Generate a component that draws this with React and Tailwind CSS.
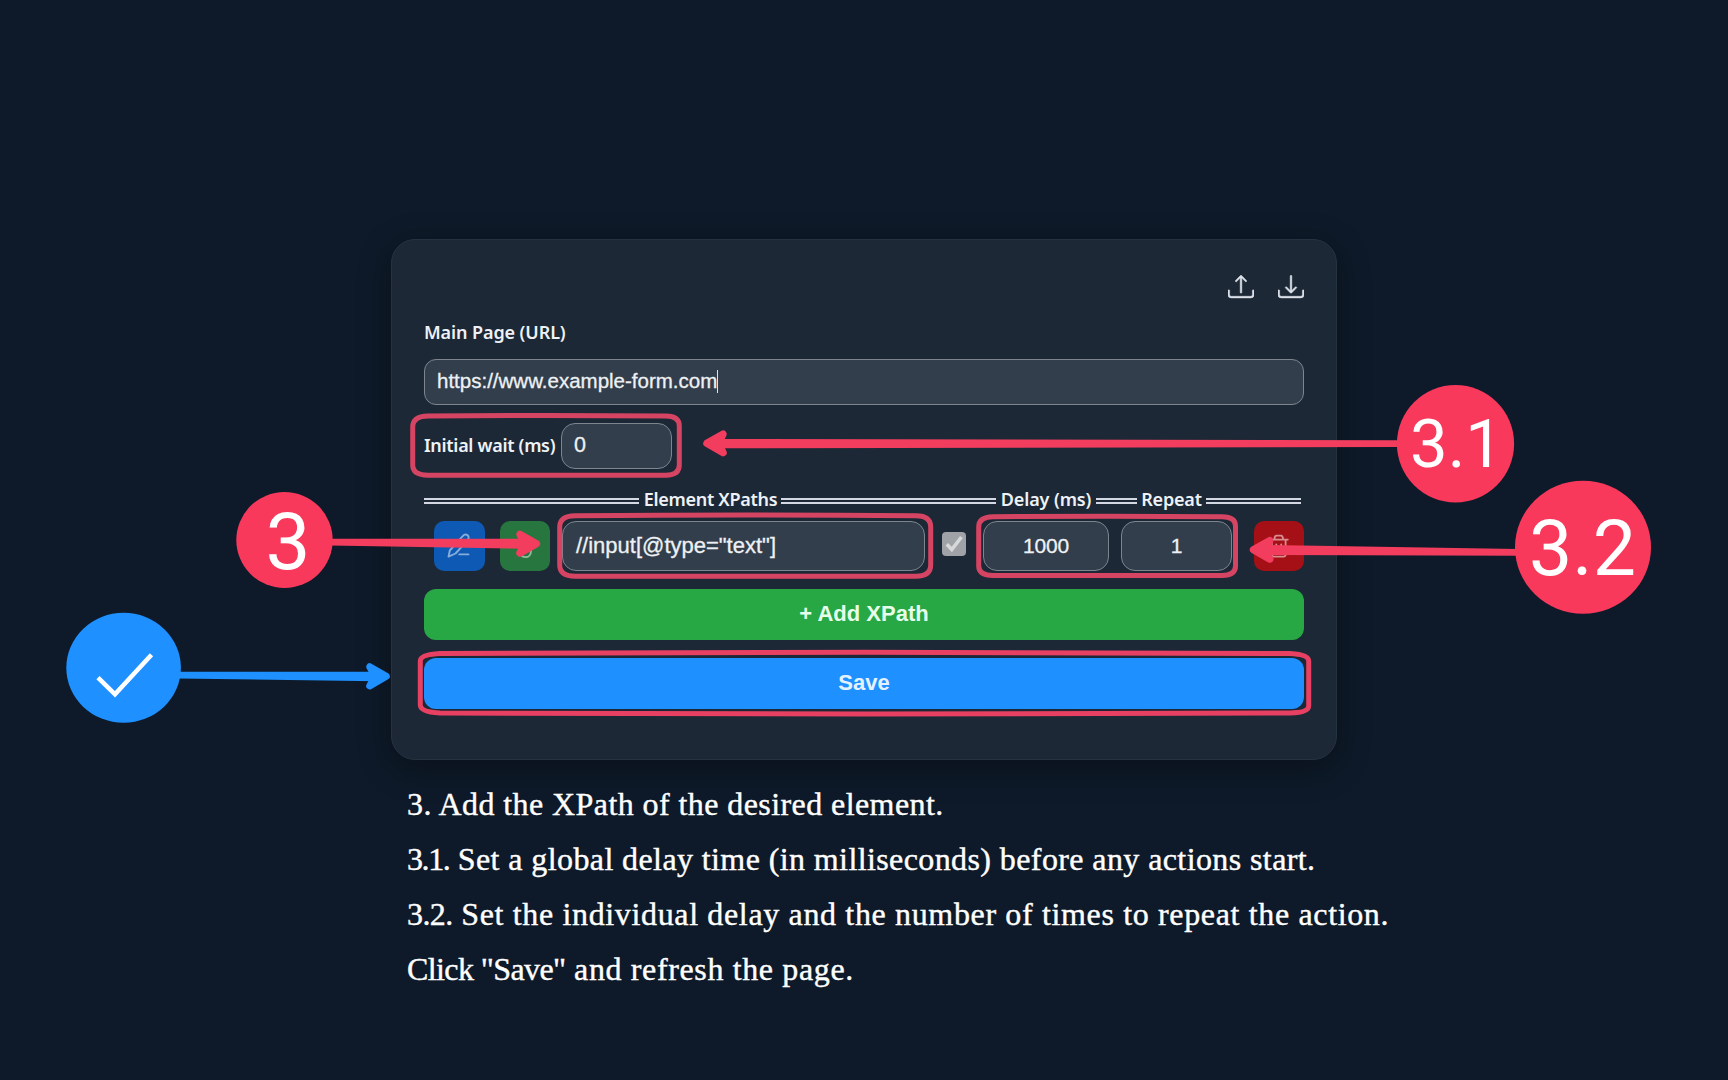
import { BsUpload, BsDownload } from "react-icons/bs";

const field =
  "flex shrink-0 items-center border-[1.5px] border-[#7d868f] bg-[#323e4b] font-['Liberation_Sans',sans-serif] text-[#eef1f4] [-webkit-text-stroke:0.3px_#eef1f4]";
const rule = "mt-[3px] h-[6px] shrink-0 border-y-2 border-[#d3d8e2]";
const heading =
  "shrink-0 whitespace-nowrap font-['Noto_Sans',sans-serif] text-lg font-semibold leading-6 text-[#eef2f6]";
const wideButton =
  "flex h-[50.5px] shrink-0 items-center justify-center rounded-xl pb-0.5 font-['Liberation_Sans',sans-serif] text-[22px] font-bold";

function EditIcon() {
  return (
    <svg viewBox="0 0 24 26" className="h-[26px] w-6" fill="none" stroke="#86acd9" strokeWidth="1.9" strokeLinecap="round" strokeLinejoin="round">
      <path d="M1.5 23.6 L2.8 17.5 L15.5 3.4 C17 1.6 19.2 1.2 20.6 2.3 C22 3.5 22 5.6 20.5 7.3 L8.5 20.5 Z" />
      <path d="M12.3 21.4 H21.5" />
    </svg>
  );
}

function TouchIcon() {
  return (
    <svg viewBox="0 0 24 26" className="h-[26px] w-6" fill="none" stroke="#94bb9f" strokeWidth="1.8" strokeLinecap="round">
      <path d="M18 15 V18 C18 22 15.5 24.2 12.5 24.2 C10.5 24.2 9 23.4 8 22" />
    </svg>
  );
}

function TrashIcon() {
  return (
    <svg viewBox="0 0 20 24" className="h-6 w-5" fill="none" stroke="#d88d92" strokeWidth="1.8" strokeLinecap="round" strokeLinejoin="round">
      <path d="M1.2 5.6 H18.8" />
      <path d="M5.5 5.2 Q5.5 1.6 7.6 1.6 H12 Q14 1.6 14 5.2" />
      <path d="M2.8 5.8 V20.5 Q2.8 22.6 4.8 22.6 H14.4 Q16.6 22.6 16.6 20.5 V5.8" />
      <path d="M7.3 10.5 V17 M12.2 10.5 V17" />
    </svg>
  );
}

function Annotations() {
  return (
    <svg viewBox="0 0 1728 1080" className="pointer-events-none absolute inset-0 h-[1080px] w-[1728px]">
      <g fill="none" stroke="#d54563" strokeWidth="5">
        <path d="M428 416 Q546 415 666 416 Q679.3 416 679.3 426 V465 Q679.3 475 666 475.3 Q546 475.6 428 475.3 Q412.7 475 412.7 465 V427 Q412.7 416.2 428 416 Z" />
        <path d="M575 515.7 Q745 514.2 916 515.7 Q930.7 515.7 930.7 527 V565 Q930.7 576 916 576.3 Q745 577 575 576.3 Q559.7 576 559.7 565 V527 Q559.7 515.9 575 515.7 Z" />
        <path d="M993 516.7 Q1107 516 1222 516.7 Q1235.5 516.7 1235.5 526 V566 Q1235.5 575.3 1222 575.5 Q1107 575.9 993 575.5 Q978.7 575.3 978.7 566 V527 Q978.7 516.9 993 516.7 Z" />
      </g>
      <path
        d="M440 653.5 Q700 652.3 865 652.3 Q1030 652.3 1290 653.5 Q1308.7 654.5 1308.7 661 V706 Q1308.7 712.5 1290 713 Q1030 714 865 714 Q700 714 440 713 Q420.3 712 420.3 705 V661 Q420.3 654.5 440 653.5 Z"
        fill="none"
        stroke="#e84062"
        strokeWidth="5"
      />
      <g fill="#f23d5e" stroke="#f23d5e" strokeLinejoin="round" strokeLinecap="round">
        <path d="M715 439 L1400 440.3 V447 L715 448.3 Z" stroke="none" />
        <path d="M707 443.3 L723 434.2 L718.5 443.3 L723 452.6 Z" strokeWidth="7.5" />
        <path d="M330 538.7 L526 538.7 V548.7 L330 545.5 Z" stroke="none" />
        <path d="M536.3 543.7 L520 534.4 L524.5 543.7 L520 553 Z" strokeWidth="7.5" />
        <path d="M1266 545 L1518 549 V555.7 L1266 555 Z" stroke="none" />
        <path d="M1253.5 549.7 L1269.7 540.7 L1265.2 549.7 L1269.7 559 Z" strokeWidth="7.5" />
      </g>
      <g fill="#1e90ff" stroke="#1e90ff" strokeLinejoin="round" strokeLinecap="round">
        <ellipse cx="123.6" cy="667.8" rx="57.3" ry="55" stroke="none" />
        <path d="M178 671.8 L376 671.8 V681.2 L178 678.5 Z" stroke="none" />
        <path d="M386.3 676.3 L369.7 666.7 L375 676.3 L369.7 686 Z" strokeWidth="7" />
      </g>
      <path d="M98 677.6 L115 694.3 L151.5 654.8" fill="none" stroke="#fff" strokeWidth="4.6" />
      <g fill="#f8395c">
        <ellipse cx="284.5" cy="540" rx="48.2" ry="48" />
        <ellipse cx="1455.5" cy="443.7" rx="58.6" ry="58.7" />
        <ellipse cx="1583" cy="547.3" rx="68" ry="66.5" />
      </g>
    </svg>
  );
}

export default function App() {
  return (
    <main className="relative h-[1080px] w-[1728px] overflow-hidden bg-[#0e1a29]">
      <section className="ml-[391px] mt-[239px] flex h-[521px] w-[946px] flex-col rounded-3xl border border-[#253340] bg-[#1c2836] px-8 pt-[33px] shadow-[0_8px_32px_rgba(0,0,0,0.35)]">
        <div className="flex h-[26px] shrink-0 translate-y-[0.7px] justify-end gap-6 text-[#dde2ea]">
          <BsUpload className="size-[26px]" strokeWidth="0.3" />
          <BsDownload className="size-[26px]" strokeWidth="0.3" />
        </div>
        <label className={heading + " mt-[21px] tracking-[-0.1px]"}>Main Page (URL)</label>
        <div className={field + " mt-[15px] h-[46px] rounded-xl pb-0.5 pl-3 text-[20.5px]"}>
          https://www.example-form.com
          <span className="h-[23px] w-px bg-[#dfe3e8]" />
        </div>
        <div className="mt-[18px] flex h-[46px] shrink-0 items-center">
          <label className={heading + " w-[137px] pb-0.5 tracking-[-0.3px]"}>Initial wait (ms)</label>
          <div className={field + " h-[46px] w-[111px] rounded-[14px] pb-0.5 pl-3 text-[21.5px]"}>0</div>
        </div>

        <div className="mt-[18px] flex h-6 shrink-0 items-center text-center">
          <div className={rule + " w-[214.5px]"} />
          <span className={heading + " w-[142px] pl-0.5 tracking-[-0.3px]"}>Element XPaths</span>
          <div className={rule + " w-[215.5px]"} />
          <span className={heading + " w-[100px] tracking-[-0.1px]"}>Delay (ms)</span>
          <div className={rule + " w-[41px]"} />
          <span className={heading + " w-[69px] tracking-[-0.2px]"}>Repeat</span>
          <div className={rule + " w-[95px]"} />
        </div>

        <div className="mt-[9.5px] flex h-[50.5px] shrink-0 items-center pl-2.5">
          <button className="flex size-[50.5px] shrink-0 items-center justify-center rounded-[10px] bg-[#0d59b3]">
            <EditIcon />
          </button>
          <button className="ml-[15px] flex size-[50.5px] shrink-0 items-center justify-center rounded-[10px] bg-[#28763f]">
            <TouchIcon />
          </button>
          <div className={field + " ml-3 h-[50.5px] w-[363px] rounded-[14px] pb-px pl-[13px] text-[22px]"}>
            //input[@type="text"]
          </div>
          <div className="ml-[17px] mb-[3px] flex size-6 shrink-0 items-center justify-center rounded bg-[#9fa2a6]">
            <svg viewBox="0 0 24 24" className="size-6" fill="none" stroke="#d6d8da" strokeWidth="3.6">
              <path d="M4.8 12.2 L9.8 17.5 L19.5 5" />
            </svg>
          </div>
          <div className={field + " ml-[17px] h-[50.5px] w-[126px] justify-center rounded-[14px] pb-px text-[21px] tracking-[-0.2px]"}>1000</div>
          <div className={field + " ml-3 h-[50.5px] w-[111px] justify-center rounded-[14px] pb-px text-[21px]"}>1</div>
          <button className="ml-[21.5px] flex size-[50.5px] shrink-0 items-center justify-center rounded-[10px] bg-[#a41015]">
            <TrashIcon />
          </button>
        </div>

        <button className={wideButton + " mt-[18px] bg-[#28a745] text-[#e6ffea]"}>+ Add XPath</button>
        <button className={wideButton + " mt-[18.5px] bg-[#1e90ff] text-[#e4f2ff]"}>Save</button>
      </section>

      <div className="ml-[407px] mt-[16.7px] flex flex-col whitespace-nowrap font-['Liberation_Serif',serif] text-[32px] leading-[55px] text-white [-webkit-text-stroke:0.4px_white]">
        <p className="tracking-[0.42px]">3. Add the XPath of the desired element.</p>
        <p className="tracking-[0.4px]">
          <span className="tracking-[-1.4px]">3.1.</span> Set a global delay time (in milliseconds) before any actions start.
        </p>
        <p className="tracking-[0.65px]">
          <span className="tracking-[-0.6px]">3.2.</span> Set the individual delay and the number of times to repeat the action.
        </p>
        <p className="tracking-[0.63px]">
          <span className="tracking-[-0.6px]">Click "Save"</span> and refresh the page.
        </p>
      </div>

      <Annotations />
      <span className="absolute left-[240px] top-[502px] w-24 text-center font-[Roboto] text-[80px] leading-[80px] text-white">3</span>
      <span className="absolute left-[1398px] top-[411px] w-[117px] text-center font-[Roboto] text-[67px] leading-[67px] text-white">3.1</span>
      <span className="absolute left-[1514.5px] top-[510.5px] w-[136px] text-center font-[Roboto] text-[77px] leading-[77px] text-white">3.2</span>
    </main>
  );
}
